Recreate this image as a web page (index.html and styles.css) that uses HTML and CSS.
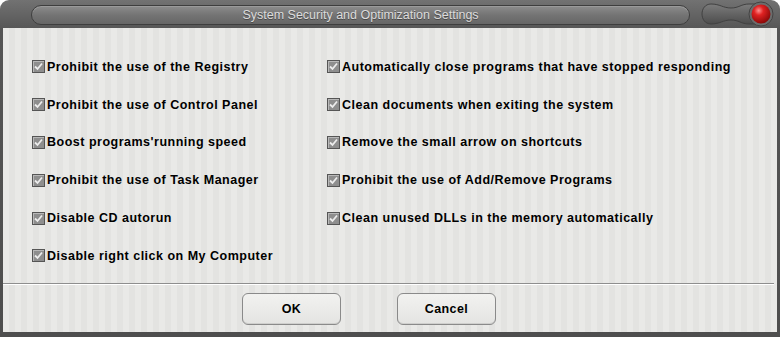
FILE: index.html
```html
<!doctype html>
<html>
<head>
<title>System Security and Optimization Settings</title>
<meta charset="utf-8">
<link rel="stylesheet" href="styles.css">
</head>
<body>
<div class="window">
	<div class="titlebar">
		<div class="pill">System Security and Optimization Settings</div>
		<div class="closer">
			<svg width="74" height="26" viewBox="0 0 74 26">
				<defs>
					<linearGradient id="wave" x1="0" y1="0" x2="0" y2="1">
						<stop offset="0" stop-color="#7c7c7c"/>
						<stop offset="1" stop-color="#4c4c4c"/>
					</linearGradient>
					<radialGradient id="ball" cx="0.38" cy="0.32" r="0.7">
						<stop offset="0" stop-color="#ff9090"/>
						<stop offset="0.35" stop-color="#e02222"/>
						<stop offset="1" stop-color="#8a0808"/>
					</radialGradient>
				</defs>
				<path d="M10 3 C19 3 22 7 30 7 C38 7 40 3 48 3 L60 3 L60 23 L48 23 C40 23 38 19 30 19 C22 19 19 23 10 23 C4 23 1 18 1 13 C1 8 4 3 10 3 Z" fill="url(#wave)" stroke="#414141" stroke-width="1"/>
				<circle cx="60" cy="13" r="12" fill="#6c6c6c" stroke="#444"/>
				<circle cx="60" cy="13" r="9.5" fill="url(#ball)"/>
			</svg>
		</div>
	</div>
	<div class="panel">
		<div class="options">
			<div class="col">
				<label class="opt"><span class="box"></span>Prohibit the use of the Registry</label>
				<label class="opt"><span class="box"></span>Prohibit the use of Control Panel</label>
				<label class="opt"><span class="box"></span>Boost programs'running speed</label>
				<label class="opt"><span class="box"></span>Prohibit the use of Task Manager</label>
				<label class="opt"><span class="box"></span>Disable CD autorun</label>
				<label class="opt"><span class="box"></span>Disable right click on My Computer</label>
			</div>
			<div class="col">
				<label class="opt"><span class="box"></span>Automatically close programs that have stopped responding</label>
				<label class="opt"><span class="box"></span>Clean documents when exiting the system</label>
				<label class="opt"><span class="box"></span>Remove the small arrow on shortcuts</label>
				<label class="opt"><span class="box"></span>Prohibit the use of Add/Remove Programs</label>
				<label class="opt"><span class="box"></span>Clean unused DLLs in the memory automatically</label>
			</div>
		</div>
		<div class="sep"></div>
		<div class="buttons">
			<button type="button">OK</button>
			<button type="button">Cancel</button>
		</div>
	</div>
</div>
</body>
</html>
```
FILE: styles.css
```css
body {
	margin:0;
	background:#fff;
	font-family:"Liberation Sans", Arial, sans-serif;
}
.window {
	width:780px;
	height:337px;
	box-sizing:border-box;
	border-radius:9px 9px 0 0;
	background:linear-gradient(#727272, #555 30px, #4e4e4e);
	padding:0 3px 5px 3px;
	display:flex;
	flex-direction:column;
}
.titlebar {
	height:28px;
	display:flex;
	align-items:flex-start;
}
.pill {
	margin:5px 0 0 28px;
	width:657px;
	height:18px;
	border:1px solid #3e3e3e;
	border-radius:10px;
	background:linear-gradient(#8c8c8c, #747474 50%, #666);
	box-shadow:inset 0 1px 0 #9a9a9a;
	color:#dcdcdc;
	font-size:12.5px;
	line-height:18px;
	text-align:center;
	text-shadow:0 1px 0 #4a4a4a;
}
.closer {
	margin:1px 0 0 11px;
	height:26px;
}
.panel {
	flex:1;
	background:repeating-linear-gradient(90deg, #e9e9e7 0, #e9e9e7 6px, #e3e3e1 6px, #e3e3e1 12px);
	display:flex;
	flex-direction:column;
}
.options {
	display:flex;
	padding:20px 0 0 29px;
	height:228px;
}
.col {
	display:flex;
	flex-direction:column;
}
.col:first-child {
	width:295px;
}
.opt {
	height:37.8px;
	display:flex;
	align-items:center;
	font-weight:bold;
	font-size:12.5px;
	letter-spacing:0.5px;
	color:#000;
}
.box {
	width:11px;
	height:11px;
	margin-right:2px;
	border:1px solid #555;
	background:#8e8e8e url("data:image/svg+xml,%3Csvg xmlns='http://www.w3.org/2000/svg' width='11' height='11'%3E%3Cpath d='M2 5.5 L4.5 8 L9 2.5' fill='none' stroke='%23ececec' stroke-width='1.8'/%3E%3C/svg%3E") no-repeat;
	box-shadow:inset 1px 1px 0 #b8b8b8;
}
.sep {
	margin-top:7px;
	height:1px;
	background:#8e8e8e;
	border-bottom:1px solid #fff;
	margin-right:3px;
}
.buttons {
	display:flex;
	gap:56px;
	padding-left:239px;
	margin-top:8px;
}
button {
	width:99px;
	height:32px;
	border:1px solid #8a8a8a;
	border-radius:6px;
	background:linear-gradient(#f2f2f0, #e4e4e2);
	box-shadow:inset 0 -1px 0 #cfcfcd;
	font-family:"Liberation Sans", Arial, sans-serif;
	font-weight:bold;
	font-size:12.5px;
	letter-spacing:0.4px;
	color:#000;
	padding:0;
}
```
